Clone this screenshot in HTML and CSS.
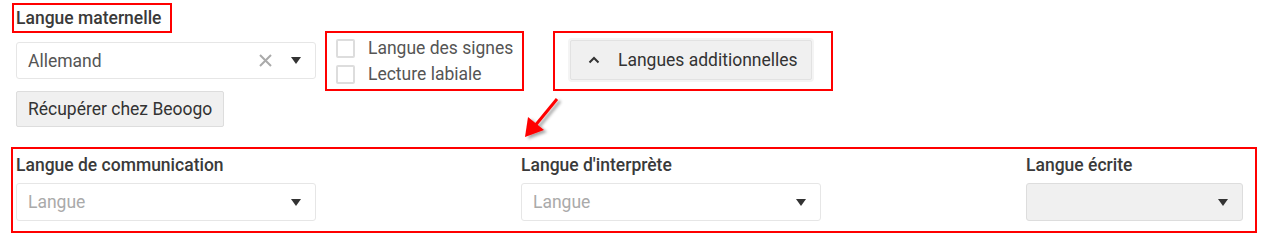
FILE: index.html
```html
<!DOCTYPE html>
<html lang="fr">
<head>
    <meta charset="UTF-8">
    <title>Langues</title>
    <link rel="stylesheet" href="styles.css">
</head>
<body>
	<div class="page">
		<div class="top-row">
			<div class="col-main">
				<div class="field-label">Langue maternelle</div>
				<div class="select">
					<span class="select-value">Allemand</span>
					<svg class="select-clear" width="13" height="13" viewBox="0 0 13 13"><path d="M1 1 L12 12 M12 1 L1 12" stroke="#aaa" stroke-width="2"/></svg>
					<span class="select-caret"></span>
				</div>
				<button class="btn">Récupérer chez Beoogo</button>
			</div>
			<div class="checks">
				<label class="check"><span class="check-box"></span>Langue des signes</label>
				<label class="check"><span class="check-box"></span>Lecture labiale</label>
			</div>
			<div class="more">
				<button class="btn btn-more">
					<svg class="chevron" width="12" height="8" viewBox="0 0 12 8"><path d="M1.5 6.5 L6 2 L10.5 6.5" fill="none" stroke="#333" stroke-width="2"/></svg>
					Langues additionnelles
				</button>
			</div>
		</div>

		<div class="extra-row">
			<div class="field">
				<div class="field-label">Langue de communication</div>
				<div class="select">
					<span class="select-value placeholder">Langue</span>
					<span class="select-caret"></span>
				</div>
			</div>
			<div class="field">
				<div class="field-label">Langue d'interprète</div>
				<div class="select">
					<span class="select-value placeholder">Langue</span>
					<span class="select-caret"></span>
				</div>
			</div>
			<div class="field">
				<div class="field-label">Langue écrite</div>
				<div class="select select-disabled">
					<span class="select-value"></span>
					<span class="select-caret"></span>
				</div>
			</div>
		</div>

		<!-- annotations -->
		<div class="mark mark-label"></div>
		<div class="mark mark-checks"></div>
		<div class="mark mark-more"></div>
		<div class="mark mark-extra"></div>
		<svg class="arrow" width="60" height="60" viewBox="0 0 60 60">
			<defs>
				<filter id="shadow" x="-30%" y="-30%" width="160%" height="160%">
					<feDropShadow dx="3" dy="2" stdDeviation="1.5" flood-color="#000" flood-opacity="0.35"/>
				</filter>
			</defs>
			<g filter="url(#shadow)">
				<line x1="42" y1="9" x2="19" y2="37" stroke="#f00" stroke-width="3"/>
				<polygon points="10,47 13,27 29,40" fill="#f00"/>
			</g>
		</svg>
	</div>
</body>
</html>
```

FILE: styles.css
```css
body{
	margin: 0;
	background: #fff;
	font-family: Roboto, "Liberation Sans", sans-serif;
	color: #333;
}
.page{
	position: relative;
	width: 1268px;
	height: 244px;
}
.top-row{
	display: flex;
	padding: 7px 0 0 16px;
}
.col-main{
	width: 300px;
}
.field-label{
	font-size: 17.5px;
	font-weight: 500;
	line-height: 22px;
	color: #3a3a3a;
	margin-bottom: 13px;
}
.select{
	display: flex;
	align-items: center;
	box-sizing: border-box;
	height: 37px;
	border: 1px solid #e6e6e6;
	border-radius: 3px;
	background: #fff;
	padding: 0 14px 0 11px;
	font-size: 17.5px;
}
.select-value{
	flex: 1;
	color: #555;
}
.select-value.placeholder{
	color: #aaa;
}
.select-clear{
	margin-right: 19px;
}
.select-caret{
	width: 0;
	height: 0;
	border-left: 5px solid transparent;
	border-right: 5px solid transparent;
	border-top: 7px solid #333;
}
.select-disabled{
	background: #f0f0f0;
	border-color: #ddd;
}
.btn{
	display: flex;
	align-items: center;
	box-sizing: border-box;
	height: 36px;
	margin-top: 12px;
	padding: 0 11px;
	font-family: inherit;
	font-size: 17.5px;
	color: #333;
	background: #f0f0f0;
	border: 1px solid #ddd;
	border-radius: 2px;
}
.checks{
	margin-left: 20px;
	width: 234px;
	padding-top: 28px;
}
.check{
	display: flex;
	align-items: center;
	height: 26px;
	font-size: 17.5px;
	color: #555;
}
.check-box{
	box-sizing: border-box;
	width: 19px;
	height: 19px;
	border: 2px solid #ddd;
	border-radius: 2px;
	margin-right: 13px;
}
.more{
	padding-top: 33px;
}
.btn-more{
	width: 242px;
	height: 40px;
	margin-top: 0;
	padding: 0 0 0 17px;
	border-color: #e2e2e2;
	box-shadow: 0 0 0 2px #f4f4f4;
}
.chevron{
	margin-right: 18px;
}
.extra-row{
	display: grid;
	grid-template-columns: 505px 505px 217px;
	padding: 27px 0 0 16px;
}
.extra-row .field-label{
	margin-bottom: 7px;
}
.extra-row .select{
	width: 300px;
	height: 38px;
}
.extra-row .field:last-child .select{
	width: 217px;
}
.mark{
	position: absolute;
	box-sizing: border-box;
	border: 2px solid #f00;
}
.mark-label{
	left: 12px;
	top: 3px;
	width: 160px;
	height: 30px;
}
.mark-checks{
	left: 325px;
	top: 31px;
	width: 199px;
	height: 60px;
}
.mark-more{
	left: 553px;
	top: 31px;
	width: 280px;
	height: 60px;
}
.mark-extra{
	left: 11px;
	top: 147px;
	width: 1246px;
	height: 86px;
}
.arrow{
	position: absolute;
	left: 515px;
	top: 90px;
}
```
